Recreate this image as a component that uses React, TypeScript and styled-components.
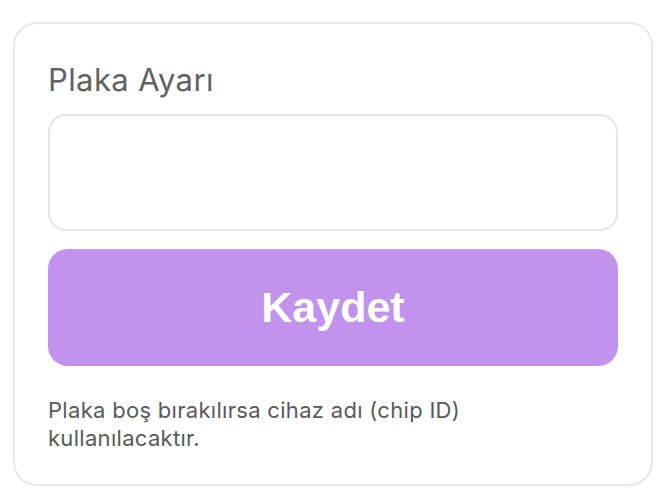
import React from 'react'
import styled, { createGlobalStyle } from 'styled-components'

const GlobalStyle = createGlobalStyle`
  html, body {
    margin: 0;
    padding: 0;
    background: #ffffff;
  }
  body {
    font-family: Inter, "Noto Sans", "Liberation Sans", sans-serif;
  }
`

const Page = styled.div`
  padding: 22px 17px 3px 13px;
`

const Card = styled.div`
  display: flex;
  flex-direction: column;
  border: 2px solid #e8e8e8;
  border-radius: 24px;
  padding: 38px 33px 32px;
  background: #ffffff;
`

const Title = styled.h2`
  margin: 0 0 16px;
  font-size: 31px;
  line-height: 36px;
  font-weight: 400;
  letter-spacing: 0.4px;
  color: #626262;
`

const PlateInput = styled.input`
  box-sizing: border-box;
  width: 100%;
  height: 117px;
  border: 2px solid #e6e6e6;
  border-radius: 18px;
  padding: 0 20px;
  font-family: inherit;
  font-size: 24px;
  outline: none;
`

const SaveButton = styled.button`
  margin-top: 18px;
  height: 117px;
  border: none;
  border-radius: 20px;
  background: #c193ed;
  color: #ffffff;
  font-family: "Liberation Sans", Arial, sans-serif;
  font-size: 43px;
  font-weight: 700;
  cursor: pointer;
`

const Hint = styled.p`
  margin: 30px 0 0;
  font-size: 22px;
  line-height: 28px;
  letter-spacing: 0.3px;
  color: #5a5a5a;
`

export default function App() {
  return (
    <>
      <GlobalStyle />
      <Page>
        <Card>
          <Title>Plaka Ayarı</Title>
          <PlateInput type="text" />
          <SaveButton>Kaydet</SaveButton>
          <Hint>
            Plaka boş bırakılırsa cihaz adı (chip ID)
            <br />
            kullanılacaktır.
          </Hint>
        </Card>
      </Page>
    </>
  )
}
